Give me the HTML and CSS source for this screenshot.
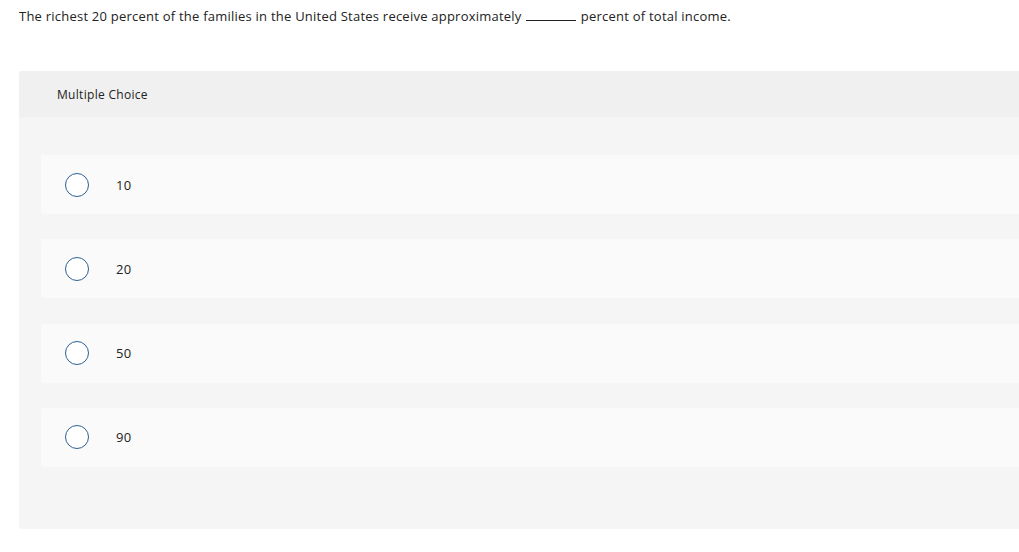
FILE: index.html
```html
<!DOCTYPE html>
<html>
<head>
<meta charset="utf-8">
<link rel="stylesheet" href="styles.css">
</head>
<body>
<div class="question">The richest 20 percent of the families in the United States receive approximately <span class="blank"></span> percent of total income.</div>
<div class="panel">
  <div class="panel-head">Multiple Choice</div>
  <div class="panel-body">
    <div class="option"><span class="radio"></span><span class="label">10</span></div>
    <div class="option"><span class="radio"></span><span class="label">20</span></div>
    <div class="option"><span class="radio"></span><span class="label">50</span></div>
    <div class="option"><span class="radio"></span><span class="label">90</span></div>
  </div>
</div>
</body>
</html>
```
FILE: styles.css
```css
html, body {
  margin: 0;
  padding: 0;
  background: #fff;
  overflow: hidden;
}
body {
  font-family: "Open Sans", "Liberation Sans", sans-serif;
  color: #222;
  width: 1019px;
  height: 552px;
}
.question {
  padding: 7px 0 0 19px;
  font-size: 13px;
  letter-spacing: 0.23px;
  word-spacing: 0;
  line-height: 18px;
  white-space: nowrap;
}
.blank {
  display: inline-block;
  width: 50px;
  border-bottom: 1px solid #222;
  vertical-align: baseline;
  margin: 0 1px;
}
.panel {
  margin: 46px 0 0 19px;
  width: 1020px;
  border-radius: 3px;
  overflow: hidden;
  background: #f5f5f5;
}
.panel-head {
  background: #f0f0f0;
  height: 46px;
  display: flex;
  align-items: center;
  padding-left: 38px;
  font-size: 12px;
  letter-spacing: 0.3px;
}
.panel-body {
  padding: 38px 0 62px 22px;
  display: flex;
  flex-direction: column;
  gap: 25.33px;
}
.option {
  background: #fafafa;
  height: 59px;
  border-radius: 3px;
  display: flex;
  align-items: center;
  padding-left: 24px;
}
.radio {
  width: 22px;
  height: 22px;
  border: 1.5px solid #2c5f93;
  border-radius: 50%;
  background: #fff;
  flex: none;
}
.label {
  margin-left: 27px;
  font-size: 13px;
  letter-spacing: 0.3px;
}
```
